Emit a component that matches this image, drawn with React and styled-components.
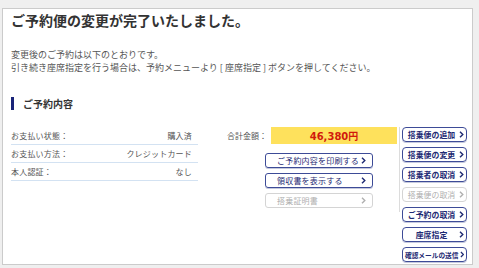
import React from "react";
import styled, { createGlobalStyle } from "styled-components";

const GlobalStyle = createGlobalStyle`
  html, body {
    margin: 0;
    padding: 0;
    background: #efefef;
  }
  body {
    font-family: "Noto Sans CJK JP", "Noto Sans", sans-serif;
    color: #444;
  }
`;

const details = [
  { label: "お支払い状態：", value: "購入済" },
  { label: "お支払い方法：", value: "クレジットカード" },
  { label: "本人認証：", value: "なし" },
];

const printButtons = [
  { text: "ご予約内容を印刷する" },
  { text: "領収書を表示する" },
  { text: "搭乗証明書", disabled: true },
];

const menuButtons = [
  { text: "搭乗便の追加" },
  { text: "搭乗便の変更" },
  { text: "搭乗者の取消" },
  { text: "搭乗便の取消", disabled: true },
  { text: "ご予約の取消" },
  { text: "座席指定" },
  { text: "確認メールの送信", tight: true },
];

function Chevron() {
  return (
    <svg width="5" height="7" viewBox="0 0 5 7">
      <polyline
        points="1,0.8 3.8,3.5 1,6.2"
        fill="none"
        stroke="currentColor"
        strokeWidth="1.4"
      />
    </svg>
  );
}

export default function App() {
  return (
    <React.Fragment>
      <GlobalStyle />
      <Panel>
        <Title>ご予約便の変更が完了いたしました。</Title>
        <Message>
          変更後のご予約は以下のとおりです。
          <br />
          引き続き座席指定を行う場合は、予約メニューより&nbsp;[&nbsp;座席指定&nbsp;]&nbsp;ボタンを押してください。
        </Message>
        <SectionHeading>ご予約内容</SectionHeading>
        <Body>
          <DetailTable>
            {details.map((d) => (
              <DetailRow key={d.label}>
                <span>{d.label}</span>
                <span>{d.value}</span>
              </DetailRow>
            ))}
          </DetailTable>
          <Middle>
            <TotalRow>
              <TotalLabel>合計金額：</TotalLabel>
              <TotalBox>46,380円</TotalBox>
            </TotalRow>
            <PrintList>
              {printButtons.map((b) => (
                <PrintButton key={b.text} $disabled={b.disabled}>
                  <span>{b.text}</span>
                  <Chevron />
                </PrintButton>
              ))}
            </PrintList>
          </Middle>
          <Separator />
          <Menu>
            {menuButtons.map((b) => (
              <MenuButton key={b.text} $disabled={b.disabled} $tight={b.tight}>
                <MenuText>{b.text}</MenuText>
                <Chevron />
              </MenuButton>
            ))}
          </Menu>
        </Body>
      </Panel>
    </React.Fragment>
  );
}

const Panel = styled.div`
  box-sizing: border-box;
  width: 471px;
  height: 257px;
  margin: 8px 0 0 2px;
  padding: 2px 4px 0 8px;
  background: #fff;
  border: 1px solid #cbcbcb;
`;

const Title = styled.h1`
  margin: 0;
  font-size: 14px;
  line-height: 18px;
  font-weight: bold;
  color: #333;
`;

const Message = styled.p`
  margin: 19px 0 0;
  font-size: 9px;
  line-height: 13px;
  color: #555;
`;

const SectionHeading = styled.h2`
  margin: 23px 0 0;
  height: 13px;
  padding-left: 9px;
  border-left: 3px solid #1a2479;
  font-size: 10px;
  line-height: 13px;
  font-weight: bold;
  color: #333;
`;

const Body = styled.div`
  display: flex;
  align-items: flex-start;
  margin-top: 17px;
`;

const DetailTable = styled.div`
  width: 187px;
  display: flex;
  flex-direction: column;
`;

const DetailRow = styled.div`
  display: flex;
  justify-content: space-between;
  align-items: center;
  height: 17px;
  padding-right: 6px;
  border-bottom: 1px solid #d3e2f2;
  font-size: 8px;
  letter-spacing: 0.2px;
  color: #555;
`;

const Middle = styled.div`
  width: 170px;
  margin-left: 29px;
  display: flex;
  flex-direction: column;
`;

const TotalRow = styled.div`
  display: flex;
  align-items: center;
  height: 17px;
`;

const TotalLabel = styled.span`
  width: 44px;
  font-size: 8px;
  color: #555;
`;

const TotalBox = styled.div`
  flex: 1;
  height: 17px;
  display: flex;
  align-items: center;
  justify-content: center;
  background: #fee15c;
  color: #d11a0c;
  font-family: "DejaVu Sans", "Noto Sans CJK JP", sans-serif;
  font-size: 10px;
  font-weight: bold;
`;

const PrintList = styled.div`
  display: flex;
  flex-direction: column;
  gap: 5px;
  margin: 9px 0 0 38px;
`;

const PrintButton = styled.div`
  box-sizing: border-box;
  width: 108px;
  height: 15px;
  display: flex;
  align-items: center;
  justify-content: space-between;
  padding: 0 6px 0 11px;
  border: 1px solid ${(p) => (p.$disabled ? "#d4d4d4" : "#3d4b97")};
  border-radius: 3px;
  box-shadow: ${(p) => (p.$disabled ? "none" : "0 1px 0 #c5c9dd")};
  color: ${(p) => (p.$disabled ? "#b0b0b0" : "#1e2a73")};
  font-size: 8px;
  letter-spacing: 0.2px;
  font-weight: normal;
  white-space: nowrap;
`;

const Separator = styled.div`
  width: 1px;
  height: 85px;
  margin: 0 2px;
  background: #dcdcdc;
`;

const Menu = styled.div`
  display: flex;
  flex-direction: column;
  gap: 5px;
`;

const MenuButton = styled.div`
  box-sizing: border-box;
  width: 65px;
  height: 15px;
  display: flex;
  align-items: center;
  gap: 1px;
  padding: 0 2px 0 2px;
  border: 1px solid ${(p) => (p.$disabled ? "#d4d4d4" : "#3d4b97")};
  border-radius: 4px;
  box-shadow: ${(p) => (p.$disabled ? "none" : "0 1px 0 #c5c9dd")};
  color: ${(p) => (p.$disabled ? "#b0b0b0" : "#1e2a73")};
  font-size: ${(p) => (p.$tight ? "6.7px" : "7.9px")};
  letter-spacing: 0;
  font-weight: ${(p) => (p.$disabled ? "normal" : "bold")};
`;

const MenuText = styled.span`
  flex: 1;
  text-align: center;
  white-space: nowrap;
`;
